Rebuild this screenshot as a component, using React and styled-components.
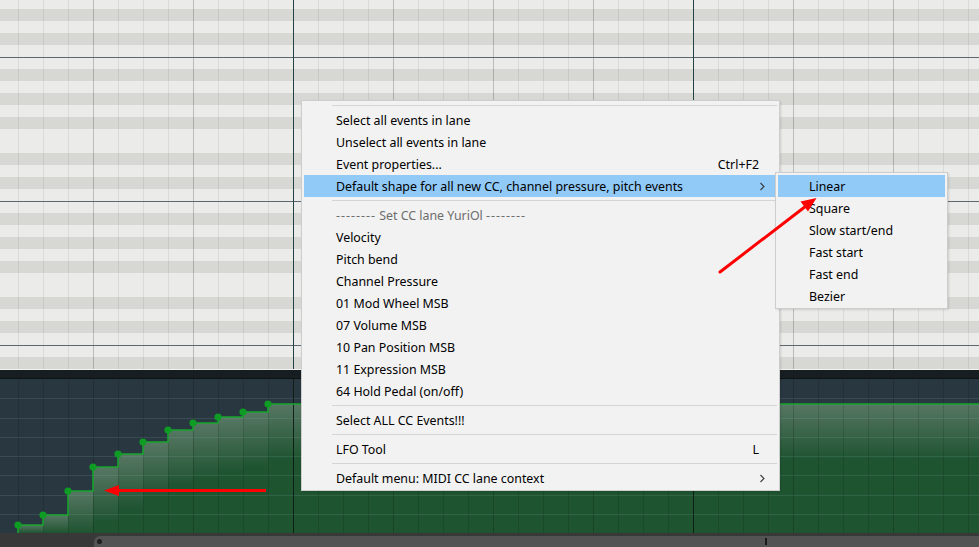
import React from 'react';
import styled, { createGlobalStyle } from 'styled-components';

const GlobalStyle = createGlobalStyle`
  html, body {
    margin: 0;
    padding: 0;
    background: #283740;
    overflow: hidden;
  }
  body {
    font-family: "Noto Sans", "Open Sans", sans-serif;
  }
`;

const LIGHT = '#ebebe9';
const DARK = '#d7d8d3';

const Editor = styled.div`
  position: relative;
  width: 979px;
  height: 547px;
  display: flex;
  flex-direction: column;
  overflow: hidden;
`;

// note rows: one octave is 12 rows of 12px, sharps are the darker rows
const PianoRoll = styled.div`
  flex: none;
  height: 369px;
  background:
    linear-gradient(to right, #1f4443 0 1px, transparent 1px) 293px 0 / 400px 100%,
    linear-gradient(to bottom, #5e676e 0 1px, transparent 1px) 0 57px / 100% 144px,
    linear-gradient(to right, rgba(0, 0, 0, 0.14) 0 1px, transparent 1px) 93px 0 / 100px 100%,
    linear-gradient(to right, rgba(0, 0, 0, 0.07) 0 1px, transparent 1px) 18px 0 / 25px 100%,
    linear-gradient(
      to bottom,
      ${LIGHT} 0 12px, ${DARK} 12px 24px, ${LIGHT} 24px 36px, ${DARK} 36px 48px,
      ${LIGHT} 48px 60px, ${DARK} 60px 72px, ${LIGHT} 72px 96px, ${DARK} 96px 108px,
      ${LIGHT} 108px 120px, ${DARK} 120px 132px, ${LIGHT} 132px 144px
    ) 0 57px / 100% 144px;
`;

const LaneHeader = styled.div`
  flex: none;
  height: 8px;
  background: #171e21;
  border-top: 1px solid #f3f3f3;
  border-bottom: 1px solid #0d1214;
`;

const Lane = styled.div`
  flex: none;
  height: 154px;
  background: #283740;
  svg {
    display: block;
  }
`;

const ScrollBar = styled.div`
  flex: 1;
  display: flex;
  background: #383838;
`;

const ScrollGutter = styled.div`
  flex: none;
  width: 94px;
`;

const ScrollThumb = styled.div`
  position: relative;
  flex: 1;
  margin-top: 3px;
  display: flex;
  align-items: center;
  padding-left: 3px;
  background: #535353;
  border-top-left-radius: 6px;
`;

const ThumbGrip = styled.span`
  width: 5px;
  height: 5px;
  border-radius: 50%;
  background: #1f1f1f;
`;

const PlayMarker = styled.span`
  position: absolute;
  left: 671px;
  top: 2px;
  width: 2px;
  height: 7px;
  background: #1a1a1a;
`;

const Menu = styled.div`
  position: absolute;
  left: ${p => p.left}px;
  top: ${p => p.top}px;
  width: ${p => p.width}px;
  box-sizing: border-box;
  padding: ${p => (p.sub ? '2px 0 1px' : '1px 0')};
  background: #f2f2f2;
  border: 1px solid #cdcdcd;
  box-shadow: 1px 1px 2px rgba(0, 0, 0, 0.12);
  font-size: 12.4px;
  color: #000;
  z-index: 2;
`;

const Item = styled.div`
  display: flex;
  align-items: center;
  height: 22px;
  margin: 0 2px;
  padding-left: ${p => (p.sub ? 31 : 32)}px;
  padding-right: 18px;
  background: ${p => (p.active ? '#91c9f7' : 'transparent')};
  color: ${p => (p.disabled ? '#6d6d6d' : '#000')};
  white-space: nowrap;
`;

const Label = styled.span`
  flex: 1;
`;

const Dashes = styled.span`
  letter-spacing: 1px;
`;

const Shortcut = styled.span`
  flex: none;
`;

const Chevron = styled.svg`
  flex: none;
  margin-right: -10px;
`;

const Separator = styled.div`
  height: 7px;
  margin: 0 2px 0 30px;
  display: flex;
  align-items: center;
  &::after {
    content: '';
    flex: 1;
    height: 1px;
    background: #d5d5d5;
  }
`;

const Annotations = styled.svg`
  position: absolute;
  left: 0;
  top: 0;
  pointer-events: none;
  z-index: 3;
`;

const mainMenu = [
  { sep: true },
  { label: 'Select all events in lane' },
  { label: 'Unselect all events in lane' },
  { label: 'Event properties...', shortcut: 'Ctrl+F2' },
  { label: 'Default shape for all new CC, channel pressure, pitch events', submenu: true, active: true },
  { sep: true },
  { header: 'Set CC lane YuriOl', disabled: true },
  { label: 'Velocity' },
  { label: 'Pitch bend' },
  { label: 'Channel Pressure' },
  { label: '01 Mod Wheel MSB' },
  { label: '07 Volume MSB' },
  { label: '10 Pan Position MSB' },
  { label: '11 Expression MSB' },
  { label: '64 Hold Pedal (on/off)' },
  { sep: true },
  { label: 'Select ALL CC Events!!!' },
  { sep: true },
  { label: 'LFO Tool', shortcut: 'L' },
  { sep: true },
  { label: 'Default menu: MIDI CC lane context', submenu: true },
];

const shapeMenu = [
  { label: 'Linear', active: true },
  { label: 'Square' },
  { label: 'Slow start/end' },
  { label: 'Fast start' },
  { label: 'Fast end' },
  { label: 'Bezier' },
];

// CC events in lane coordinates (x, y from top of lane)
const events = [
  [18, 146], [43, 136], [68, 112], [93, 88], [118, 75], [143, 63],
  [168, 51], [193, 44], [218, 38], [243, 33], [268, 25],
];

const LANE_W = 979;
const LANE_H = 154;

function MenuList({ items, sub }) {
  return items.map((it, i) =>
    it.sep ? (
      <Separator key={i} />
    ) : (
      <Item key={i} active={it.active} disabled={it.disabled} sub={sub}>
        <Label>
          {it.header ? (
            <>
              <Dashes>--------</Dashes> {it.header} <Dashes>--------</Dashes>
            </>
          ) : (
            it.label
          )}
        </Label>
        {it.shortcut && <Shortcut>{it.shortcut}</Shortcut>}
        {it.submenu && (
          <Chevron width="14" height="9" viewBox="0 0 14 9">
            <path d="M5.5 1 L9 4.5 L5.5 8" fill="none" stroke="#3a3a3a" strokeWidth="1.1" />
          </Chevron>
        )}
      </Item>
    )
  );
}

function CCLane() {
  const vLines = [];
  for (let x = 18; x < LANE_W; x += 25) vLines.push(x);
  const hLines = [];
  for (let k = 1; k < 8; k++) hLines.push(Math.round(k * 19.25));

  const columns = events.map(([x, y], i) => {
    const next = events[i + 1] ? events[i + 1][0] : LANE_W;
    return { x, y, w: next - x };
  });

  let line = `M18 ${LANE_H} L18 ${events[0][1]}`;
  events.forEach(([x, y], i) => {
    if (i > 0) line += ` L${x} ${events[i - 1][1]} L${x} ${y}`;
  });
  line += ` L${LANE_W} ${events[events.length - 1][1]}`;

  return (
    <svg width={LANE_W} height={LANE_H} viewBox={`0 0 ${LANE_W} ${LANE_H}`}>
      <defs>
        <linearGradient id="stepSheen" x1="0" y1="0" x2="0" y2="1">
          <stop offset="0" stopColor="#8f9a96" stopOpacity="0.5" />
          <stop offset="1" stopColor="#8f9a96" stopOpacity="0" />
        </linearGradient>
      </defs>
      {columns.map(c => (
        <g key={c.x}>
          <rect x={c.x} y={c.y} width={c.w} height={LANE_H - c.y} fill="#1f5431" />
          <rect x={c.x} y={c.y} width={c.w} height={Math.min(55, LANE_H - c.y)} fill="url(#stepSheen)" />
        </g>
      ))}
      {hLines.map(y => (
        <rect key={y} x="0" y={y} width={LANE_W} height="1" fill="#8fb4ba" opacity="0.16" />
      ))}
      {vLines.map(x => (
        <rect
          key={x}
          x={x}
          y="0"
          width="1"
          height={LANE_H}
          fill={(x - 293) % 400 === 0 ? '#0c1a14' : '#000'}
          opacity={(x - 293) % 400 === 0 ? 0.9 : (x - 93) % 100 === 0 ? 0.18 : 0.12}
        />
      ))}
      <path d={line} fill="none" stroke="#17a52d" strokeWidth="1.6" />
      {events.map(([x, y]) => (
        <circle key={x} cx={x} cy={y} r="3.6" fill="#0e9c25" />
      ))}
    </svg>
  );
}

export default function App() {
  return (
    <>
      <GlobalStyle />
      <Editor>
        <PianoRoll />
        <LaneHeader />
        <Lane>
          <CCLane />
        </Lane>
        <ScrollBar>
          <ScrollGutter />
          <ScrollThumb>
            <ThumbGrip />
            <PlayMarker />
          </ScrollThumb>
        </ScrollBar>

        <Menu left={301} top={100} width={479}>
          <MenuList items={mainMenu} />
        </Menu>
        <Menu left={775} top={172} width={173} sub>
          <MenuList items={shapeMenu} sub />
        </Menu>

        <Annotations width="979" height="547" viewBox="0 0 979 547">
          <line x1="266" y1="490.5" x2="116" y2="490.5" stroke="#ff0000" strokeWidth="3" />
          <polygon points="104,490.5 119,485 119,496" fill="#ff0000" />
          <line x1="720" y1="272" x2="806" y2="206" stroke="#ff0000" strokeWidth="3" strokeLinecap="round" />
          <polygon points="816.5,198 808,211.5 800.5,201.5" fill="#ff0000" />
        </Annotations>
      </Editor>
    </>
  );
}
